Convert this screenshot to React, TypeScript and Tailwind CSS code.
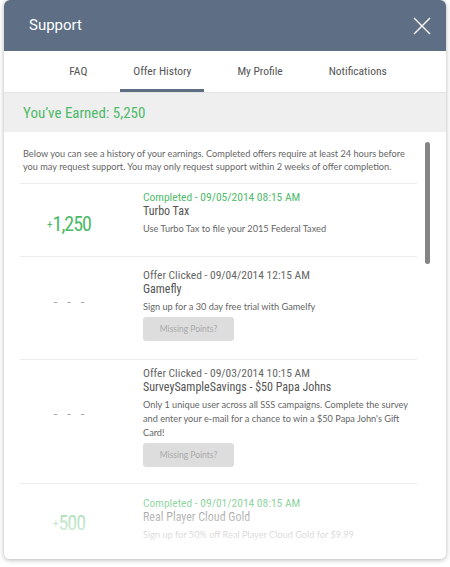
import React from 'react';

const cond = "font-['Roboto_Condensed','Liberation_Sans_Narrow',Roboto,sans-serif]";
const body = "font-['Lato','Open_Sans',sans-serif]";

type Offer = {
  status: string;
  done: boolean;
  name: string;
  desc: string;
  amount?: string;
  rowClass: string;
  amtClass: string;
  button?: boolean;
};

const offers: Offer[] = [
  {
    status: 'Completed - 09/05/2014 08:15 AM',
    done: true,
    name: 'Turbo Tax',
    desc: 'Use Turbo Tax to file your 2015 Federal Taxed',
    amount: '1,250',
    rowClass: 'pt-[6px] pb-[20px]',
    amtClass: 'mt-[22px]',
  },
  {
    status: 'Offer Clicked - 09/04/2014 12:15 AM',
    done: false,
    name: 'Gamefly',
    desc: 'Sign up for a 30 day free trial with Gamelfy',
    rowClass: 'pt-[11px] pb-[18px]',
    amtClass: 'mt-[26px]',
    button: true,
  },
  {
    status: 'Offer Clicked - 09/03/2014 10:15 AM',
    done: false,
    name: 'SurveySampleSavings - $50 Papa Johns',
    desc: "Only 1 unique user across all SSS campaigns. Complete the survey and enter your e-mail for a chance to win a $50 Papa John's Gift Card!",
    rowClass: 'pt-[6px] pb-[16px]',
    amtClass: 'mt-[40px]',
    button: true,
  },
  {
    status: 'Completed - 09/01/2014 08:15 AM',
    done: true,
    name: 'Real Player Cloud Gold',
    desc: 'Sign up for 50% off Real Player Cloud Gold for $9.99',
    amount: '500',
    rowClass: 'pt-[12px] pb-[20px]',
    amtClass: 'mt-[15px]',
  },
];

const tabs = ['FAQ', 'Offer History', 'My Profile', 'Notifications'];

function OfferRow({ offer }: { offer: Offer }) {
  return (
    <div className={`flex border-t border-[#ececec] ${offer.rowClass}`}>
      <div className="w-[98px] shrink-0 flex justify-center">
        {offer.amount ? (
          <div className={`${cond} ${offer.amtClass} text-[20px] leading-[24px] tracking-[-1px] text-[#4cb968] flex items-start`}>
            <span className="text-[11px] leading-[14px] mt-[6px] mr-[1px]">+</span>
            {offer.amount}
          </div>
        ) : (
          <div className={`${body} ${offer.amtClass} text-[12px] leading-[16px] text-[#9a9a9a] tracking-[3px] pl-[3px]`}>- - -</div>
        )}
      </div>
      <div className="ml-[25px] flex-1 min-w-0">
        <div className={`${cond} text-[11.5px] leading-[14px] ${offer.done ? 'text-[#4fbb6b]' : 'text-[#666]'}`}>
          {offer.status}
        </div>
        <div className={`${cond} text-[12px] leading-[15px] text-[#555]`}>{offer.name}</div>
        <div className={`${body} mt-[3px] text-[9.2px] leading-[14px] text-[#666] pr-[6px]`}>{offer.desc}</div>
        {offer.button && (
          <div className={`${body} mt-[3px] w-[91px] h-[24px] rounded-[3px] bg-[#dddddd] text-[#a9a9a9] text-[8.5px] flex items-center justify-center`}>
            Missing Points?
          </div>
        )}
      </div>
    </div>
  );
}

export default function App() {
  return (
    <div className="w-[450px] h-[567px] bg-white">
      <div className="mx-1 h-[559px] rounded-md overflow-hidden bg-white shadow-[0_1px_5px_rgba(0,0,0,0.3)] flex flex-col">
        <div className="h-[51px] bg-[#5d6e85] flex items-center justify-between pl-[25px] pr-[15px] shrink-0">
          <div className="font-['Roboto',sans-serif] text-[15px] text-white">Support</div>
          <svg width="18" height="18" viewBox="0 0 18 18" fill="none" stroke="white" strokeWidth="1.4">
            <path d="M1 1L17 17M17 1L1 17" />
          </svg>
        </div>
        <div className="h-[42px] flex justify-center gap-[20px] border-b border-[#e3e3e3] shrink-0 pl-[6px]">
          {tabs.map((t) => (
            <div
              key={t}
              className={`${cond} px-[13px] flex items-center text-[11.5px] text-[#555] border-b-[3px] ${t === 'Offer History' ? 'border-[#5d6e85]' : 'border-transparent'} pt-[3px]`}
            >
              {t}
            </div>
          ))}
        </div>
        <div className={`h-[39px] bg-[#efefef] shrink-0 flex items-center pl-[19px] pt-[2px] ${cond} text-[15px] text-[#4cb968]`}>
          You’ve Earned: 5,250
        </div>
        <div className="relative flex-1 min-h-0 overflow-hidden flex pl-4 pr-4">
          <div className="flex-1 min-w-0">
            <p className={`${body} pt-[15px] pb-[10px] pl-[3px] text-[9.2px] leading-[13px] text-[#666]`}>
              Below you can see a history of your earnings. Completed offers require at least 24 hours before you may request support. You may only request support within 2 weeks of offer completion.
            </p>
            {offers.map((o) => (
              <OfferRow key={o.status} offer={o} />
            ))}
          </div>
          <div className="ml-2 w-[5px] shrink-0">
            <div className="mt-[10px] h-[122px] w-[5px] rounded-full bg-[#858585]" />
          </div>
          <div className="absolute left-0 right-0 bottom-0 h-[80px] bg-gradient-to-b from-white/0 via-white/60 to-white" />
        </div>
      </div>
    </div>
  );
}
